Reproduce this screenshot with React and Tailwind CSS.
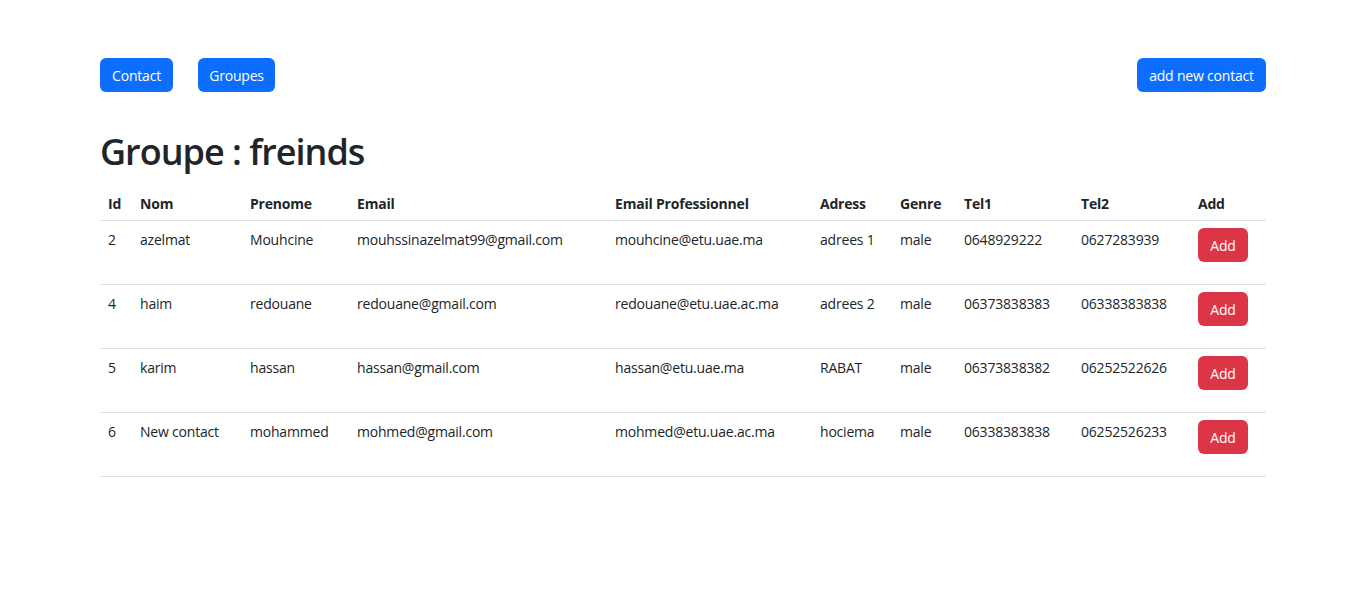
import React from "react";

const rows = [
  ["2", "azelmat", "Mouhcine", "mouhssinazelmat99@gmail.com", "mouhcine@etu.uae.ma", "adrees 1", "male", "0648929222", "0627283939"],
  ["4", "haim", "redouane", "redouane@gmail.com", "redouane@etu.uae.ac.ma", "adrees 2", "male", "06373838383", "06338383838"],
  ["5", "karim", "hassan", "hassan@gmail.com", "hassan@etu.uae.ma", "RABAT", "male", "06373838382", "06252522626"],
  ["6", "New contact", "mohammed", "mohmed@gmail.com", "mohmed@etu.uae.ac.ma", "hociema", "male", "06338383838", "06252526233"],
];

const headers = ["Id", "Nom", "Prenome", "Email", "Email Professionnel", "Adress", "Genre", "Tel1", "Tel2", "Add"];

const grid = "grid grid-cols-[32px_110px_107px_258px_205px_80px_64px_117px_117px_76px]";

export default function App() {
  return (
    <div
      className="min-h-[611px] bg-white px-[100px] pt-[58px] text-[#212529]"
      style={{ fontFamily: '"Open Sans", "Noto Sans", sans-serif' }}
    >
      <div className="flex items-center justify-between">
        <div className="flex items-center gap-[25px]">
          <button className="flex h-[34px] w-[73px] items-center justify-center rounded-[6px] bg-[#0d6efd] text-[14px] tracking-[-0.2px] text-white">
            Contact
          </button>
          <button className="flex h-[34px] w-[77px] items-center justify-center rounded-[6px] bg-[#0d6efd] text-[14px] tracking-[-0.2px] text-white">
            Groupes
          </button>
        </div>
        <button className="flex h-[34px] w-[129px] items-center justify-center rounded-[6px] bg-[#0d6efd] text-[14px] tracking-[-0.2px] text-white">
          add new contact
        </button>
      </div>

      <h1 className="mt-[36px] mb-[8px] text-[36px] font-semibold leading-[48px] tracking-[-1px]">Groupe : freinds</h1>

      <div className="text-[14px] tracking-[-0.2px]">
        <div className={`${grid} h-[37px] border-b border-[#dee2e6] pt-[9px] font-bold leading-[21px]`}>
          {headers.map((h) => (
            <div key={h} className="px-2 whitespace-nowrap">{h}</div>
          ))}
        </div>
        {rows.map((r) => (
          <div key={r[0]} className={`${grid} h-[64px] border-b border-[#dee2e6] leading-[21px]`}>
            {r.map((c, i) => (
              <div key={i} className="px-2 pt-[8px] whitespace-nowrap">{c}</div>
            ))}
            <div className="px-2 pt-[7px]">
              <button className="flex h-[34px] w-[50px] items-center justify-center rounded-[6px] bg-[#dc3545] text-[14px] text-white">
                Add
              </button>
            </div>
          </div>
        ))}
      </div>
    </div>
  );
}
